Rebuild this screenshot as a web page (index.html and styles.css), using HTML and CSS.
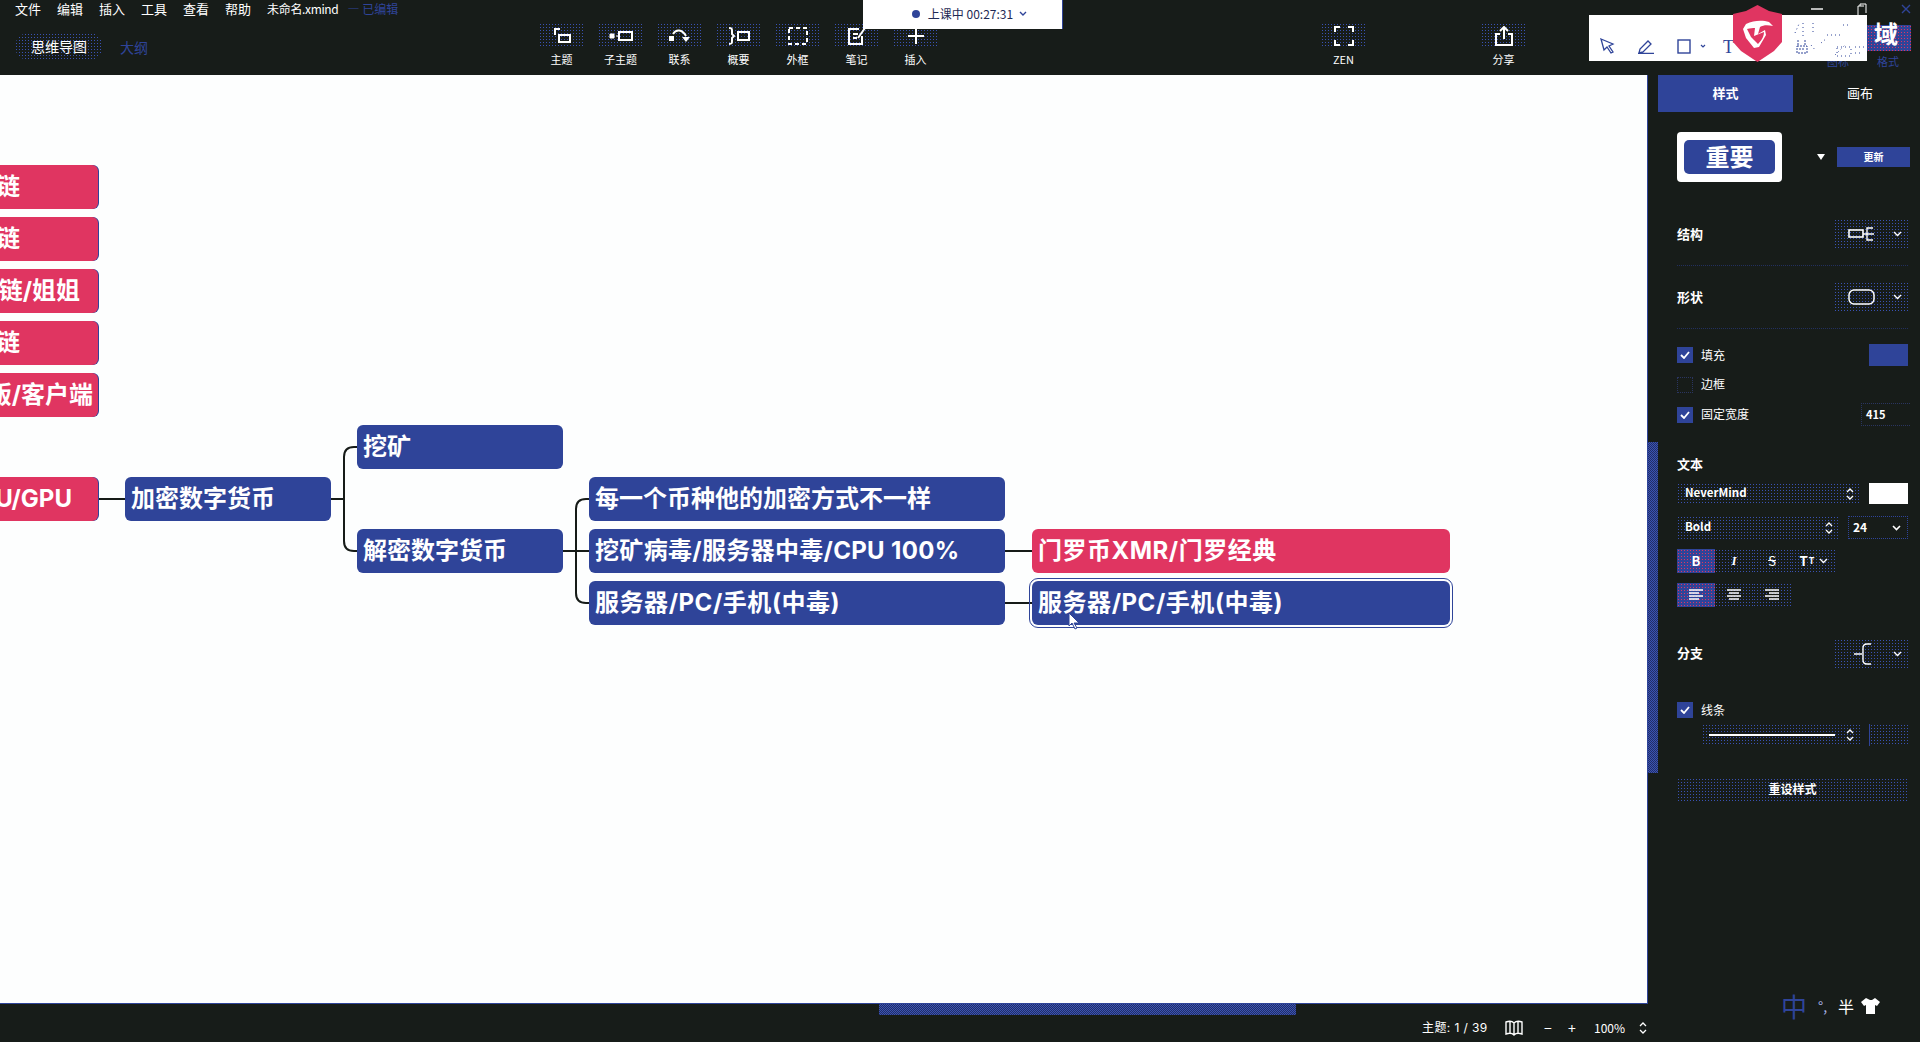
FILE: index.html
```html
<!DOCTYPE html>
<html lang="zh">
<head>
<meta charset="utf-8">
<title>未命名.xmind</title>
<link rel="stylesheet" href="styles.css">
</head>
<body>
<div class="app">
  <header class="header">
    <div class="header-left">
      <nav class="menu">
        <span>文件</span><span>编辑</span><span>插入</span><span>工具</span><span>查看</span><span>帮助</span>
        <span class="file">未命名.xmind</span><span class="edited">— 已编辑</span>
      </nav>
      <div class="modes"><span class="mode-on dots">思维导图</span><span class="mode-off">大纲</span></div>
    </div>
    <div class="tools">
      <div class="tool"><div class="tool-box dots"><svg width="20" height="18" viewBox="0 0 20 18"><path d="M3 8V2h5M7 8h11v7H7z" fill="none" stroke="#fff" stroke-width="2"/></svg></div><span>主题</span></div>
      <div class="tool"><div class="tool-box dots"><svg width="24" height="14" viewBox="0 0 24 14"><path d="M1 5h4v4H1zM7 7h3" fill="#fff" stroke="#fff"/><rect x="10" y="3" width="13" height="8" fill="none" stroke="#fff" stroke-width="2"/></svg></div><span>子主题</span></div>
      <div class="tool"><div class="tool-box dots"><svg width="24" height="18" viewBox="0 0 24 18"><path d="M1 9h5v5H1z" fill="#fff"/><path d="M5 7c3-5 9-5 13 2" fill="none" stroke="#fff" stroke-width="2"/><path d="M14 10h8l-4 5z" fill="#fff"/></svg></div><span>联系</span></div>
      <div class="tool"><div class="tool-box dots"><svg width="24" height="18" viewBox="0 0 24 18"><path d="M2 1c3 0 3 1 3 3v3l2 2-2 2v3c0 2 0 3-3 3" fill="none" stroke="#fff" stroke-width="2"/><rect x="11" y="5" width="11" height="8" fill="none" stroke="#fff" stroke-width="2"/></svg></div><span>概要</span></div>
      <div class="tool"><div class="tool-box dots"><svg width="22" height="20" viewBox="0 0 22 20"><rect x="2" y="2" width="18" height="16" fill="none" stroke="#fff" stroke-width="2" stroke-dasharray="4 3"/></svg></div><span>外框</span></div>
      <div class="tool"><div class="tool-box dots"><svg width="20" height="20" viewBox="0 0 20 20"><path d="M15 10v8H2V3h10M6 8h5M6 12h4" fill="none" stroke="#fff" stroke-width="2"/><path d="M18 2L11 12" stroke="#fff" stroke-width="2"/></svg></div><span>笔记</span></div>
      <div class="tool"><div class="tool-box dots"><svg width="18" height="18" viewBox="0 0 18 18"><path d="M9 1v16M1 9h16" stroke="#fff" stroke-width="2"/></svg></div><span>插入</span></div>
    </div>
    <div class="tool tool-zen"><div class="tool-box dots"><svg width="20" height="20" viewBox="0 0 20 20"><path d="M1 6V1h5M14 1h5v5M19 14v5h-5M6 19H1v-5" fill="none" stroke="#fff" stroke-width="2"/></svg></div><span>ZEN</span></div>
    <div class="tool tool-share"><div class="tool-box dots"><svg width="18" height="20" viewBox="0 0 18 20"><path d="M5 8H1v11h16V8h-4M9 13V2M5 5l4-4 4 4" fill="none" stroke="#fff" stroke-width="2"/></svg></div><span>分享</span></div>

    <div class="timer"><i class="timer-dot"></i><span>上课中 00:27:31</span><svg width="8" height="6" viewBox="0 0 8 6"><path d="M1 1l3 3 3-3" fill="none" stroke="#2f4499" stroke-width="1.4"/></svg></div>

    <div class="win-controls">
      <svg width="12" height="2" viewBox="0 0 12 2"><path d="M0 1h12" stroke="#fff" stroke-width="1.4"/></svg>
      <svg width="10" height="12" viewBox="0 0 10 12"><path d="M1 12V3h6M3 3V1h6v9" fill="none" stroke="#fff"/></svg>
      <svg width="10" height="10" viewBox="0 0 10 10"><path d="M1 1l8 8M9 1l-8 8" stroke="#2f4499" stroke-width="1.4"/></svg>
    </div>
    <div class="corner-btn"><span>域</span></div>
    <div class="corner-labels"><span>图标</span><span>格式</span></div>

    <div class="annot">
      <svg class="annot-ico" width="15" height="16" viewBox="0 0 15 16"><path d="M1 1l12 5-4 2 4 6-2 1-4-6-3 3z" fill="none" stroke="#2f4499" stroke-width="1.3"/></svg>
      <svg class="annot-ico" width="16" height="15" viewBox="0 0 16 15"><path d="M1 14L2 10 10 2l3 3-8 8zM0 14.500h16" fill="none" stroke="#2f4499" stroke-width="1.3"/></svg>
      <svg class="annot-ico" width="14" height="15" viewBox="0 0 14 15"><rect x="1" y="1" width="12" height="13" fill="none" stroke="#2f4499" stroke-width="1.4"/></svg>
      <svg class="annot-caret" width="6" height="4" viewBox="0 0 6 4"><path d="M1 1l2 2 2-2" fill="none" stroke="#2f4499" stroke-width="1.2"/></svg>
      <span class="annot-t">T</span>
      <svg class="annot-rabbit" width="14" height="15" viewBox="0 0 14 15"><path d="M3 1v5M10 1v5M2 7h10v7H2zM4 10h6" fill="none" stroke="#2f4499" stroke-dasharray="2 1"/></svg>
      <svg class="annot-noise" width="76" height="40" viewBox="0 0 76 40"><path d="M4 14l4-9M12 4v14M22 4v12M36 16h14M30 24l6-5M52 6h8M20 26l5 6M44 36l10-10M46 28h14v9H46zM64 28h10M64 34h8" fill="none" stroke="#2f4499" stroke-dasharray="1 3"/></svg>
    </div>
    <svg class="shield" width="49" height="57" viewBox="0 0 49 57">
      <path d="M24.500 0L36 6l13 3v28l-8 9-16.500 11L8 46l-8-9V9l13-3z" fill="#e03561"/>
      <path d="M13 19c8-4 17-4 23-2l4 4c-5-1-10-1-13 1l-2 7 7-4 1 5-7 12-5 1-8-10-3-9 3-5z" fill="#fff"/>
      <path d="M14 24c3-1 6-1 8-1l-1 8 10-4c0 5-3 9-6 12l-7-7z" fill="#e03561"/>
    </svg>
  </header>

  <div class="body">
    <div class="work">
      <main class="canvas">
        <svg class="links" width="1647" height="928" viewBox="0 0 1647 928">
          <path d="M98 424h27M331 424h13M344 424V382q0-10 10-10h3M344 424V466q0 10 10 10h3M563 476h13M576 476V434q0-10 10-10h3M576 476h13M576 476V518q0 10 10 10h3M1005 476h27M1005 528h27" fill="none" stroke="#161b18" stroke-width="2"/>
        </svg>
        <div class="node red r1 end-a">区块链</div>
        <div class="node red r2 end-a">区块链</div>
        <div class="node red r3 end-b">区块链/姐姐</div>
        <div class="node red r4 end-a">区块链</div>
        <div class="node red r5 end-c">网页版/客户端</div>
        <div class="node red r6 end-d">CPU/GPU</div>
        <div class="node blue b-crypto">加密数字货币</div>
        <div class="node blue b-mine">挖矿</div>
        <div class="node blue b-decrypt">解密数字货币</div>
        <div class="node blue c-1">每一个币种他的加密方式不一样</div>
        <div class="node blue c-2">挖矿病毒/服务器中毒/CPU 100%</div>
        <div class="node blue c-3">服务器/PC/手机(中毒)</div>
        <div class="node red d-1">门罗币XMR/门罗经典</div>
        <div class="node blue d-2">服务器/PC/手机(中毒)</div>
        <svg class="cursor" width="14" height="18" viewBox="0 0 14 18"><path d="M1 1v13l3-3 3 6 2-1-3-5h5z" fill="#fff" stroke="#2f4499"/></svg>
      </main>
      <footer class="status">
        <div class="hscroll"><div class="hthumb dense"></div></div>
        <div class="status-right">
          <span class="count">主题: 1 / 39</span>
          <svg class="book" width="18" height="16" viewBox="0 0 18 16"><path d="M9 3C7 1 4 1 1 2v12c3-1 6-1 8 1 2-2 5-2 8-1V2c-3-1-6-1-8 1zM9 3v12M5 2v11M13 2v11" fill="none" stroke="#fff" stroke-width="1.4"/></svg>
          <span class="zoom-btn">−</span><span class="zoom-btn">+</span>
          <span class="pct">100%</span>
          <svg width="8" height="14" viewBox="0 0 8 14"><path d="M1 5l3-3 3 3M1 9l3 3 3-3" fill="none" stroke="#fff" stroke-width="1.3"/></svg>
        </div>
      </footer>
    </div>

    <aside class="panel">
      <div class="vscroll"><div class="vthumb dense"></div></div>
      <div class="panel-main">
        <div class="tabs"><span class="tab tab-on">样式</span><span class="tab">画布</span></div>
        <div class="panel-body">
          <div class="row preview-row">
            <div class="preview"><div class="preview-in">重要</div></div>
            <i class="tri"></i>
            <span class="update">更新</span>
          </div>
          <div class="row sec-a"><b class="lbl">结构</b>
            <div class="pick dots"><svg width="26" height="14" viewBox="0 0 26 14"><rect x="1" y="3" width="14" height="7" fill="none" stroke="#fff" stroke-width="1.6"/><path d="M15 7h11M25 1h-6v12h6" fill="none" stroke="#fff" stroke-width="1.4"/></svg><svg class="chev" width="9" height="6" viewBox="0 0 9 6"><path d="M1 1l3.500 3.500L8 1" fill="none" stroke="#fff" stroke-width="1.3"/></svg></div>
          </div>
          <hr class="rule rule-a">
          <div class="row sec-b"><b class="lbl">形状</b>
            <div class="pick dots"><svg width="27" height="16" viewBox="0 0 27 16"><rect x="1" y="1" width="25" height="14" rx="5" fill="none" stroke="#fff" stroke-width="1.5"/></svg><svg class="chev" width="9" height="6" viewBox="0 0 9 6"><path d="M1 1l3.500 3.500L8 1" fill="none" stroke="#fff" stroke-width="1.3"/></svg></div>
          </div>
          <hr class="rule rule-b">
          <div class="row check-first">
            <label class="check"><i class="box on"><svg width="10" height="8" viewBox="0 0 10 8"><path d="M1 4l3 3 5-6" fill="none" stroke="#fff" stroke-width="1.8"/></svg></i><span>填充</span></label>
            <span class="swatch swatch-blue"></span>
          </div>
          <div class="row check-next">
            <label class="check"><i class="box"></i><span>边框</span></label>
          </div>
          <div class="row check-next">
            <label class="check"><i class="box on"><svg width="10" height="8" viewBox="0 0 10 8"><path d="M1 4l3 3 5-6" fill="none" stroke="#fff" stroke-width="1.8"/></svg></i><span>固定宽度</span></label>
            <span class="num">415</span>
          </div>
          <div class="row text-head"><b class="lbl lbl-up">文本</b></div>
          <div class="row font-row">
            <div class="field field-font dots"><span>NeverMind</span><svg width="8" height="14" viewBox="0 0 8 14"><path d="M1 5l3-3 3 3M1 9l3 3 3-3" fill="none" stroke="#fff" stroke-width="1.3"/></svg></div>
            <span class="swatch swatch-white"></span>
          </div>
          <div class="row weight-row">
            <div class="field field-weight dots"><span>Bold</span><svg width="8" height="14" viewBox="0 0 8 14"><path d="M1 5l3-3 3 3M1 9l3 3 3-3" fill="none" stroke="#fff" stroke-width="1.3"/></svg></div>
            <div class="field field-size"><span>24</span><svg class="chev" width="9" height="6" viewBox="0 0 9 6"><path d="M1 1l3.500 3.500L8 1" fill="none" stroke="#fff" stroke-width="1.6"/></svg></div>
          </div>
          <div class="seg seg-format">
            <span class="seg-btn reddots seg-b">B</span>
            <span class="seg-btn dots seg-i">I</span>
            <span class="seg-btn dots seg-s">S</span>
            <span class="seg-btn seg-wide dots">T<small>T</small><svg width="9" height="6" viewBox="0 0 9 6"><path d="M1 1l3.500 3.500L8 1" fill="none" stroke="#fff" stroke-width="1.3"/></svg></span>
          </div>
          <div class="seg seg-align">
            <span class="seg-btn reddots"><svg width="16" height="12" viewBox="0 0 16 12"><path d="M1 1h14M1 4h10M1 7h14M1 10h10" stroke="#fff" stroke-width="1.3"/></svg></span>
            <span class="seg-btn dots"><svg width="16" height="12" viewBox="0 0 16 12"><path d="M1 1h14M3 4h10M1 7h14M3 10h10" stroke="#fff" stroke-width="1.3"/></svg></span>
            <span class="seg-btn dots"><svg width="16" height="12" viewBox="0 0 16 12"><path d="M1 1h14M5 4h10M1 7h14M5 10h10" stroke="#fff" stroke-width="1.3"/></svg></span>
          </div>
          <div class="row sec-c"><b class="lbl lbl-up">分支</b>
            <div class="pick pick-branch dots"><svg width="18" height="22" viewBox="0 0 18 22"><path d="M0 11h8M17 1h-4q-4 0-4 4v12q0 4 4 4h4" fill="none" stroke="#fff" stroke-width="1.4"/></svg><svg class="chev" width="9" height="6" viewBox="0 0 9 6"><path d="M1 1l3.500 3.500L8 1" fill="none" stroke="#fff" stroke-width="1.3"/></svg></div>
          </div>
          <div class="row line-check">
            <label class="check"><i class="box on"><svg width="10" height="8" viewBox="0 0 10 8"><path d="M1 4l3 3 5-6" fill="none" stroke="#fff" stroke-width="1.8"/></svg></i><span>线条</span></label>
          </div>
          <div class="row line-row">
            <div class="field field-line dots"><i class="line"></i><svg width="8" height="14" viewBox="0 0 8 14"><path d="M1 5l3-3 3 3M1 9l3 3 3-3" fill="none" stroke="#fff" stroke-width="1.3"/></svg></div>
            <span class="line-color dots"></span>
          </div>
          <div class="reset dots">重设样式</div>
        </div>
      </div>
      <div class="ime"><span class="ime-zh">中</span><span class="ime-sm">°,</span><span class="ime-half">半</span><svg width="20" height="18" viewBox="0 0 20 18"><path d="M6 1L1 5l3 4 2-1v9h9V8l2 1 3-4-5-4-3 2h-2z" fill="#fff"/></svg></div>
    </aside>
  </div>
</div>
</body>
</html>
```

FILE: styles.css
```css
* { box-sizing: border-box; }
html, body { margin: 0; height: 100%; }
body {
  background: #171c19;
  color: #fff;
  font-family: "Noto Sans CJK SC", "Noto Sans", sans-serif;
  overflow: hidden;
}
.app { width: 1920px; height: 1042px; display: flex; flex-direction: column; }

/* dither textures */
.dots { background: radial-gradient(circle, #3a52b4 0.75px, transparent 0.95px) 0 0 / 3px 3px; }
.dense { background: repeating-conic-gradient(#3a52b4 0 25%, #222f66 0 50%) 0 0 / 2px 2px; }
.reddots { background: radial-gradient(circle, #e03561 0.8px, #2f4499 1px) 0 0 / 3px 3px; }

/* header */
.header { position: relative; height: 75px; flex: none; display: flex; }
.header-left { width: 532px; flex: none; padding-left: 15px; }
.menu { display: flex; gap: 16px; font-size: 13px; line-height: 18px; height: 20px; white-space: nowrap; }
.menu .file { font-size: 12px; letter-spacing: -0.35px; }
.menu .edited { color: #2f4499; margin-left: -7px; font-size: 12px; }
.modes { display: flex; align-items: center; margin-top: 13px; gap: 17px; }
.mode-on { width: 88px; height: 27px; border-radius: 14px; font-size: 14px; line-height: 26px; text-align: center; }
.mode-off { font-size: 14px; line-height: 26px; color: #2f4499; }
.tools { display: flex; flex: none; }
.tool { width: 59px; flex: none; display: flex; flex-direction: column; align-items: center; padding-top: 23px; }
.tool-box { width: 46px; height: 25px; display: flex; align-items: center; justify-content: center; }
.tool > span { font-size: 11px; line-height: 14px; margin-top: 4px; }
.tool-zen { margin-left: 369px; }
.tool-share { margin-left: 101px; }

.timer {
  position: absolute; left: 863px; top: 0; width: 200px; height: 29px; padding: 0 0 2px 14px;
  background: #fff; color: #1e2a55; font-size: 12px;
  display: flex; align-items: center; justify-content: center; gap: 6px;
  border-right: 1px solid #2f4499;
}
.timer-dot { width: 8px; height: 8px; border-radius: 50%; background: #2f4499; margin-right: 2px; }

.win-controls { position: absolute; left: 1811px; top: 3px; width: 100px; display: flex; align-items: center; justify-content: space-between; height: 12px; }
.corner-btn {
  position: absolute; left: 1867px; top: 25px; width: 44px; height: 26px;
  background: radial-gradient(circle, #e03561 0.8px, #2f4499 1px) 0 0 / 3px 3px;
}
.corner-btn span { display: block; font-size: 24px; font-weight: 700; line-height: 26px; margin: -5px 0 0 7px; }
.corner-labels { position: absolute; left: 1827px; top: 54px; display: flex; gap: 28px; font-size: 11px; line-height: 14px; color: #2f4499; }

.annot {
  position: absolute; left: 1589px; top: 15px; width: 278px; height: 46px;
  background: #fff; color: #2f4499;
}
.annot-ico, .annot-caret, .annot-t, .annot-rabbit, .annot-noise { position: absolute; }
.annot-ico:nth-child(1) { left: 11px; top: 23px; }
.annot-ico:nth-child(2) { left: 49px; top: 24px; }
.annot-ico:nth-child(3) { left: 88px; top: 24px; }
.annot-caret { left: 111px; top: 29px; }
.annot-t { left: 134px; top: 20px; font-size: 18px; line-height: 24px; font-family: "Liberation Serif", serif; }
.annot-rabbit { left: 206px; top: 24px; }
.annot-noise { left: 202px; top: 4px; }
.shield { position: absolute; left: 1733px; top: 5px; }

/* body */
.body { flex: 1; display: flex; min-height: 0; }
.work { width: 1648px; flex: none; display: flex; flex-direction: column; }
.canvas {
  position: relative; height: 929px; flex: none; overflow: hidden;
  background: #fdfefe;
  border-right: 1px solid #2f4499;
  border-bottom: 1px solid #2f4499;
}
.links { position: absolute; left: 0; top: 0; }

.node {
  position: absolute; height: 44px; border-radius: 6px; padding-left: 6px;
  font-family: "Inter", "Noto Sans CJK SC", sans-serif;
  font-size: 24px; font-weight: 700; line-height: 44px; color: #fff; white-space: nowrap;
}
.blue { background: #2f4499; }
.red { background: #e03561; }
.r1, .r2, .r3, .r4, .r5, .r6 { left: -100px; width: 198px; text-align: right; box-shadow: 1px 0 0 #2f4499; }
.r1 { top: 90px; }
.r2 { top: 142px; }
.r3 { top: 194px; }
.r4 { top: 246px; }
.r5 { top: 298px; }
.r6 { top: 402px; }
.end-a { padding-right: 78px; }
.end-b { padding-right: 18px; }
.end-c { padding-right: 5px; }
.end-d { padding-right: 26px; }
.b-crypto { left: 125px; top: 402px; width: 206px; }
.b-mine { left: 357px; top: 350px; width: 206px; }
.b-decrypt { left: 357px; top: 454px; width: 206px; }
.c-1, .c-2, .c-3 { left: 589px; width: 416px; }
.c-1 { top: 402px; }
.c-2 { top: 454px; letter-spacing: 0.32px; }
.c-3 { top: 506px; letter-spacing: 0.55px; }
.d-1, .d-2 { left: 1032px; width: 418px; }
.d-1 { top: 454px; letter-spacing: 0.5px; }
.d-2 { top: 506px; letter-spacing: 0.55px; outline: 1px solid #2f4499; outline-offset: 2px; }
.cursor { position: absolute; left: 1068px; top: 537px; }

/* status */
.status { position: relative; flex: 1; }
.hscroll { height: 11px; padding-left: 879px; }
.hthumb { width: 417px; height: 11px; }
.status-right { position: absolute; left: 1422px; top: 15px; display: flex; align-items: center; height: 18px; font-size: 12px; line-height: 16px; }
.count { width: 83px; letter-spacing: 0.4px; white-space: nowrap; font-family: "Inter", "Noto Sans CJK SC", sans-serif; }
.book { margin-right: 13px; }
.zoom-btn { width: 24px; text-align: center; font-size: 14px; }
.pct { margin-left: 10px; width: 45px; }

/* panel */
.panel { position: relative; width: 272px; flex: none; display: flex; overflow: hidden; }
.vscroll { width: 10px; flex: none; padding-top: 367px; }
.vthumb { height: 331px; }
.panel-main { flex: 1; min-width: 0; }
.tabs { display: flex; height: 38px; margin-top: -1px; }
.tab { width: 127px; flex: none; font-size: 13px; font-weight: 700; line-height: 37px; text-align: center; }
.tab-on { width: 135px; background: #2f4499; }
.tab + .tab { font-weight: 400; padding-right: 0; width: 134px; margin-right: -8px; }
.panel-body { padding: 0 12px 0 19px; }
.row { display: flex; align-items: center; justify-content: space-between; }
.lbl { font-size: 13px; font-weight: 700; line-height: 16px; }
.lbl-up { padding-bottom: 2px; }
.preview-row { height: 50px; margin-top: 20px; justify-content: flex-start; }
.preview { width: 105px; height: 50px; flex: none; background: #fff; border-radius: 4px; padding: 8px 7px; }
.preview-in { height: 34px; background: #2f4499; border-radius: 5px; font-size: 24px; font-weight: 700; line-height: 32px; text-align: center; }
.tri { width: 0; height: 0; flex: none; border-style: solid; border-width: 6px 4px 0; border-color: #fff transparent transparent; margin-left: 35px; }
.update { width: 73px; height: 20px; flex: none; margin-left: 12px; background: #2f4499; font-size: 10px; font-weight: 700; line-height: 20px; text-align: center; }
.sec-a { height: 29px; margin-top: 37px; }
.sec-b { height: 30px; margin-top: 16px; }
.sec-c { height: 30px; margin-top: 32px; }
.rule { height: 0; margin: 0; border: 0; border-top: 1px dotted #222f5e; }
.rule-a { margin-top: 17px; }
.rule-b { margin-top: 16px; }
.pick { width: 74px; height: 100%; position: relative; display: flex; align-items: center; justify-content: center; padding-right: 20px; }
.pick-branch { padding-right: 16px; }
.pick .chev { position: absolute; right: 6px; top: 50%; margin-top: -3px; }
.check { display: flex; align-items: center; gap: 8px; font-size: 12px; line-height: 16px; }
.check span { padding-bottom: 1px; }
.box { width: 16px; height: 16px; display: flex; align-items: center; justify-content: center; border: 1px dotted #2a3560; }
.box.on { background: #2f4499; border: 0; }
.check-first { height: 22px; margin-top: 15px; }
.check-next { height: 23px; margin-top: 7px; }
.swatch { width: 39px; height: 22px; }
.swatch-blue { background: #2f4499; }
.swatch-white { background: #fff; height: 21px; }
.num { width: 49px; height: 23px; margin-right: -2px; font-size: 11px; font-weight: 700; line-height: 21px; padding-left: 4px; border: 1px dotted #2a3560; border-right: 0; }
.text-head { height: 20px; margin-top: 29px; }
.font-row { height: 21px; margin-top: 8px; }
.weight-row { height: 23px; margin-top: 12px; }
.field { height: 100%; display: flex; align-items: center; justify-content: space-between; font-size: 11.500px; font-weight: 700; line-height: 15px; }
.field span { padding-bottom: 2px; }
.field-font { width: 183px; padding: 0 6px 0 8px; }
.field-weight { width: 162px; padding: 0 6px 0 8px; }
.field-size { width: 60px; padding: 0 6px 0 4px; font-size: 12px; border: 1px dotted #2f4499; }
.seg { display: flex; height: 24px; margin-top: 10px; }
.seg-btn { width: 38px; height: 24px; display: flex; align-items: center; justify-content: center; font-size: 13px; font-weight: 700; line-height: 18px; }
.seg-wide { width: 46px; gap: 1px; }
.seg-wide small { font-size: 9px; margin-right: 4px; }
.seg-i { font-style: italic; font-family: "Liberation Serif", serif; }
.seg-s { text-decoration: line-through; font-weight: 400; }
.line-check { height: 18px; margin-top: 32px; }
.line-row { height: 22px; margin-top: 5px; padding-left: 25px; }
.field-line { width: 158px; padding: 0 6px 0 7px; }
.line { width: 126px; height: 2px; background: #fff; }
.line-color { width: 39px; height: 22px; border-left: 1px solid #2f4499; }
.reset { height: 23px; margin-top: 32px; font-size: 12px; font-weight: 700; line-height: 21px; text-align: center; }
.ime { position: absolute; left: 133px; top: 918px; display: flex; align-items: center; gap: 4px; height: 26px; }
.ime-zh { width: 27px; font-size: 26px; line-height: 26px; color: #2f4499; font-weight: 400; }
.ime-sm { font-size: 14px; line-height: 16px; color: #aab4e6; width: 16px; margin-left: 6px; }
.ime-half { font-size: 16px; line-height: 20px; margin-right: 2px; }
```
